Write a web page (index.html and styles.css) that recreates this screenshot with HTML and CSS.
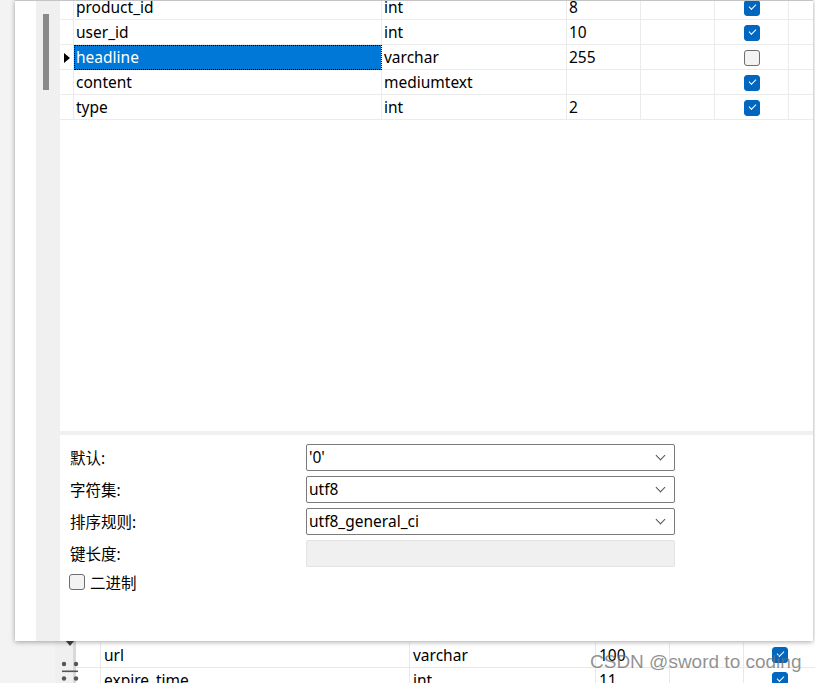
FILE: index.html
```html
<!DOCTYPE html>
<html lang="zh-CN">
<head>
  <meta charset="UTF-8">
  <title>设计表 - 字段</title>
  <link rel="stylesheet" href="styles.css">
</head>
<body>
  <!-- table designer behind the dialog -->
  <div class="backdrop">
    <div class="bg-side"></div>
    <div class="bg-tools">
      <span class="tool-arrow"></span>
      <svg class="tool-split" width="18" height="21" viewBox="0 0 18 21">
        <circle cx="3" cy="3" r="2.2" fill="#555"/>
        <circle cx="15" cy="3" r="2.2" fill="#555"/>
        <rect x="1" y="9.5" width="16" height="1.6" fill="#555"/>
        <circle cx="3" cy="17.5" r="2.2" fill="#555"/>
        <circle cx="15" cy="17.5" r="2.2" fill="#555"/>
      </svg>
    </div>
    <div class="bg-grid">
      <div class="bg-row">
        <div class="cell"></div>
        <div class="cell">url</div>
        <div class="cell">varchar</div>
        <div class="cell">100</div>
        <div class="cell"></div>
        <div class="cell center"><span class="check on"></span></div>
      </div>
      <div class="bg-row">
        <div class="cell"></div>
        <div class="cell">expire_time</div>
        <div class="cell">int</div>
        <div class="cell">11</div>
        <div class="cell"></div>
        <div class="cell center"><span class="check on"></span></div>
      </div>
    </div>
  </div>

  <div class="window">
    <div class="win-gutter"></div>
    <div class="win-scroll"><div class="thumb"></div></div>
    <div class="win-main">
      <div class="fields">
        <div class="rows">
          <div class="row">
            <div class="cell head"></div>
            <div class="cell">product_id</div>
            <div class="cell">int</div>
            <div class="cell">8</div>
            <div class="cell"></div>
            <div class="cell center"><span class="check on"></span></div>
            <div class="cell last"></div>
          </div>
          <div class="row">
            <div class="cell head"></div>
            <div class="cell">user_id</div>
            <div class="cell">int</div>
            <div class="cell">10</div>
            <div class="cell"></div>
            <div class="cell center"><span class="check on"></span></div>
            <div class="cell last"></div>
          </div>
          <div class="row">
            <div class="cell head"><span class="pointer"></span></div>
            <div class="cell selected">headline</div>
            <div class="cell">varchar</div>
            <div class="cell">255</div>
            <div class="cell"></div>
            <div class="cell center"><span class="check"></span></div>
            <div class="cell last"></div>
          </div>
          <div class="row">
            <div class="cell head"></div>
            <div class="cell">content</div>
            <div class="cell">mediumtext</div>
            <div class="cell"></div>
            <div class="cell"></div>
            <div class="cell center"><span class="check on"></span></div>
            <div class="cell last"></div>
          </div>
          <div class="row">
            <div class="cell head"></div>
            <div class="cell">type</div>
            <div class="cell">int</div>
            <div class="cell">2</div>
            <div class="cell"></div>
            <div class="cell center"><span class="check on"></span></div>
            <div class="cell last"></div>
          </div>
        </div>
      </div>

      <div class="split-bar"></div>

      <div class="props">
        <div class="prop">
          <span class="prop-label">默认:</span>
          <div class="combo">'0'<span class="chevron"></span></div>
        </div>
        <div class="prop">
          <span class="prop-label">字符集:</span>
          <div class="combo">utf8<span class="chevron"></span></div>
        </div>
        <div class="prop">
          <span class="prop-label">排序规则:</span>
          <div class="combo">utf8_general_ci<span class="chevron"></span></div>
        </div>
        <div class="prop">
          <span class="prop-label">键长度:</span>
          <div class="combo disabled"></div>
        </div>
        <label class="binary"><span class="check"></span>二进制</label>
      </div>
    </div>
  </div>

  <div class="watermark">CSDN @sword to coding</div>
</body>
</html>
```

FILE: styles.css
```css
* {
  margin: 0;
  padding: 0;
  box-sizing: border-box;
}

body {
  width: 815px;
  height: 683px;
  overflow: hidden;
  position: relative;
  background: #f3f3f3;
  font-family: "Noto Sans", "Noto Sans CJK SC", sans-serif;
  font-size: 15.5px;
  color: #000;
}

/* ---------- backdrop (main designer window) ---------- */
.backdrop {
  display: flex;
  height: 683px;
}

.bg-side {
  width: 55px;
  flex-shrink: 0;
  background: #f3f3f3;
}

.bg-tools {
  width: 21px;
  min-width: 0;
  flex-shrink: 0;
  background: #f0f0f0;
  border-right: 3px solid #d9d9d9;
  display: flex;
  flex-direction: column;
  align-items: flex-start;
  padding-top: 640px;
  gap: 15px;
}

.tool-arrow {
  width: 0;
  height: 0;
  border-left: 5px solid transparent;
  border-right: 5px solid transparent;
  border-top: 6px solid #444;
  margin-left: 10px;
}

.tool-split {
  margin-left: 6px;
  flex-shrink: 0;
  position: relative;
  z-index: 1;
}

.bg-grid {
  flex: 1;
  background: #fff;
  padding-top: 643px;
}

.bg-row {
  display: grid;
  grid-template-columns: 25px 309px 186px 74px 74px 74px;
  height: 25px;
  border-bottom: 1px solid #e8e8e8;
}

.bg-row .cell {
  border-right: 1px solid #e8e8e8;
  padding-left: 3px;
  line-height: 24px;
  white-space: nowrap;
}

.center {
  display: flex;
  align-items: center;
  justify-content: center;
}

.bg-row .center {
  justify-content: flex-start;
  padding-left: 28px;
}

/* ---------- checkboxes ---------- */
.check {
  display: inline-block;
  width: 16px;
  height: 16px;
  border-radius: 3px;
  border: 1px solid #6e6e6e;
  background: #f3f3f3;
  position: relative;
}

.check.on {
  border-color: #0067c0;
  background: #0067c0;
}

.check.on::after {
  content: "";
  position: absolute;
  left: 4px;
  top: 3px;
  width: 6px;
  height: 3px;
  border-left: 1px solid #fff;
  border-bottom: 1px solid #fff;
  transform: rotate(-45deg);
}

/* ---------- dialog window ---------- */
.window {
  position: absolute;
  left: 15px;
  top: 0;
  width: 798px;
  height: 641px;
  background: #fff;
  border-top: 1px solid #c4c4c4;
  box-shadow: 0 1px 5px rgba(0, 0, 0, 0.35);
  display: flex;
}

.win-gutter {
  width: 21px;
}

.win-scroll {
  width: 24px;
  background: #f0f0f0;
  padding: 13px 0 0 7px;
}

.thumb {
  width: 6px;
  height: 76px;
  background: #8a8a8a;
}

.win-main {
  flex: 1;
  display: flex;
  flex-direction: column;
}

.fields {
  height: 430px;
  overflow: hidden;
}

.rows {
  margin-top: -6px;
}

.row {
  display: grid;
  grid-template-columns: 14px 308px 185px 74px 74px 74px 1fr;
  height: 25px;
  border-bottom: 1px solid #ebebeb;
}

.row .cell {
  border-right: 1px solid #ebebeb;
  padding-left: 2px;
  line-height: 25px;
  white-space: nowrap;
}

.row .cell.last {
  border-right: none;
}

.row .cell.head {
  padding-left: 4px;
  display: flex;
  align-items: center;
}

.pointer {
  width: 0;
  height: 0;
  border-top: 5px solid transparent;
  border-bottom: 5px solid transparent;
  border-left: 6px solid #000;
}

.row .cell.selected {
  background: #0078d7;
  color: #fff;
  outline: 1px dotted #000;
  outline-offset: -1px;
}

.row .cell.center {
  padding-left: 0;
}

.split-bar {
  height: 4px;
  background: #f0f0f0;
}

/* ---------- properties ---------- */
.props {
  flex: 1;
  padding: 9px 0 0 10px;
}

.prop {
  display: grid;
  grid-template-columns: 236px 369px;
  align-items: center;
  height: 27px;
  margin-bottom: 5px;
}

.combo {
  height: 27px;
  border: 1px solid #7a7a7a;
  border-radius: 2px;
  padding: 0 2px;
  line-height: 25px;
  display: flex;
  justify-content: space-between;
  align-items: center;
}

.combo.disabled {
  background: #f0f0f0;
  border-color: #e3e3e3;
}

.chevron {
  width: 7px;
  height: 7px;
  border-right: 1px solid #555;
  border-bottom: 1px solid #555;
  transform: rotate(45deg);
  margin: -4px 8px 0 0;
}

.binary {
  display: flex;
  align-items: center;
  gap: 5px;
  height: 20px;
}

.binary .check {
  margin-left: -1px;
}

/* ---------- overlay ---------- */
.watermark {
  position: absolute;
  left: 590px;
  top: 651px;
  font-family: "Liberation Sans", sans-serif;
  font-size: 19px;
  color: rgba(110, 110, 110, 0.75);
  white-space: nowrap;
}
```
